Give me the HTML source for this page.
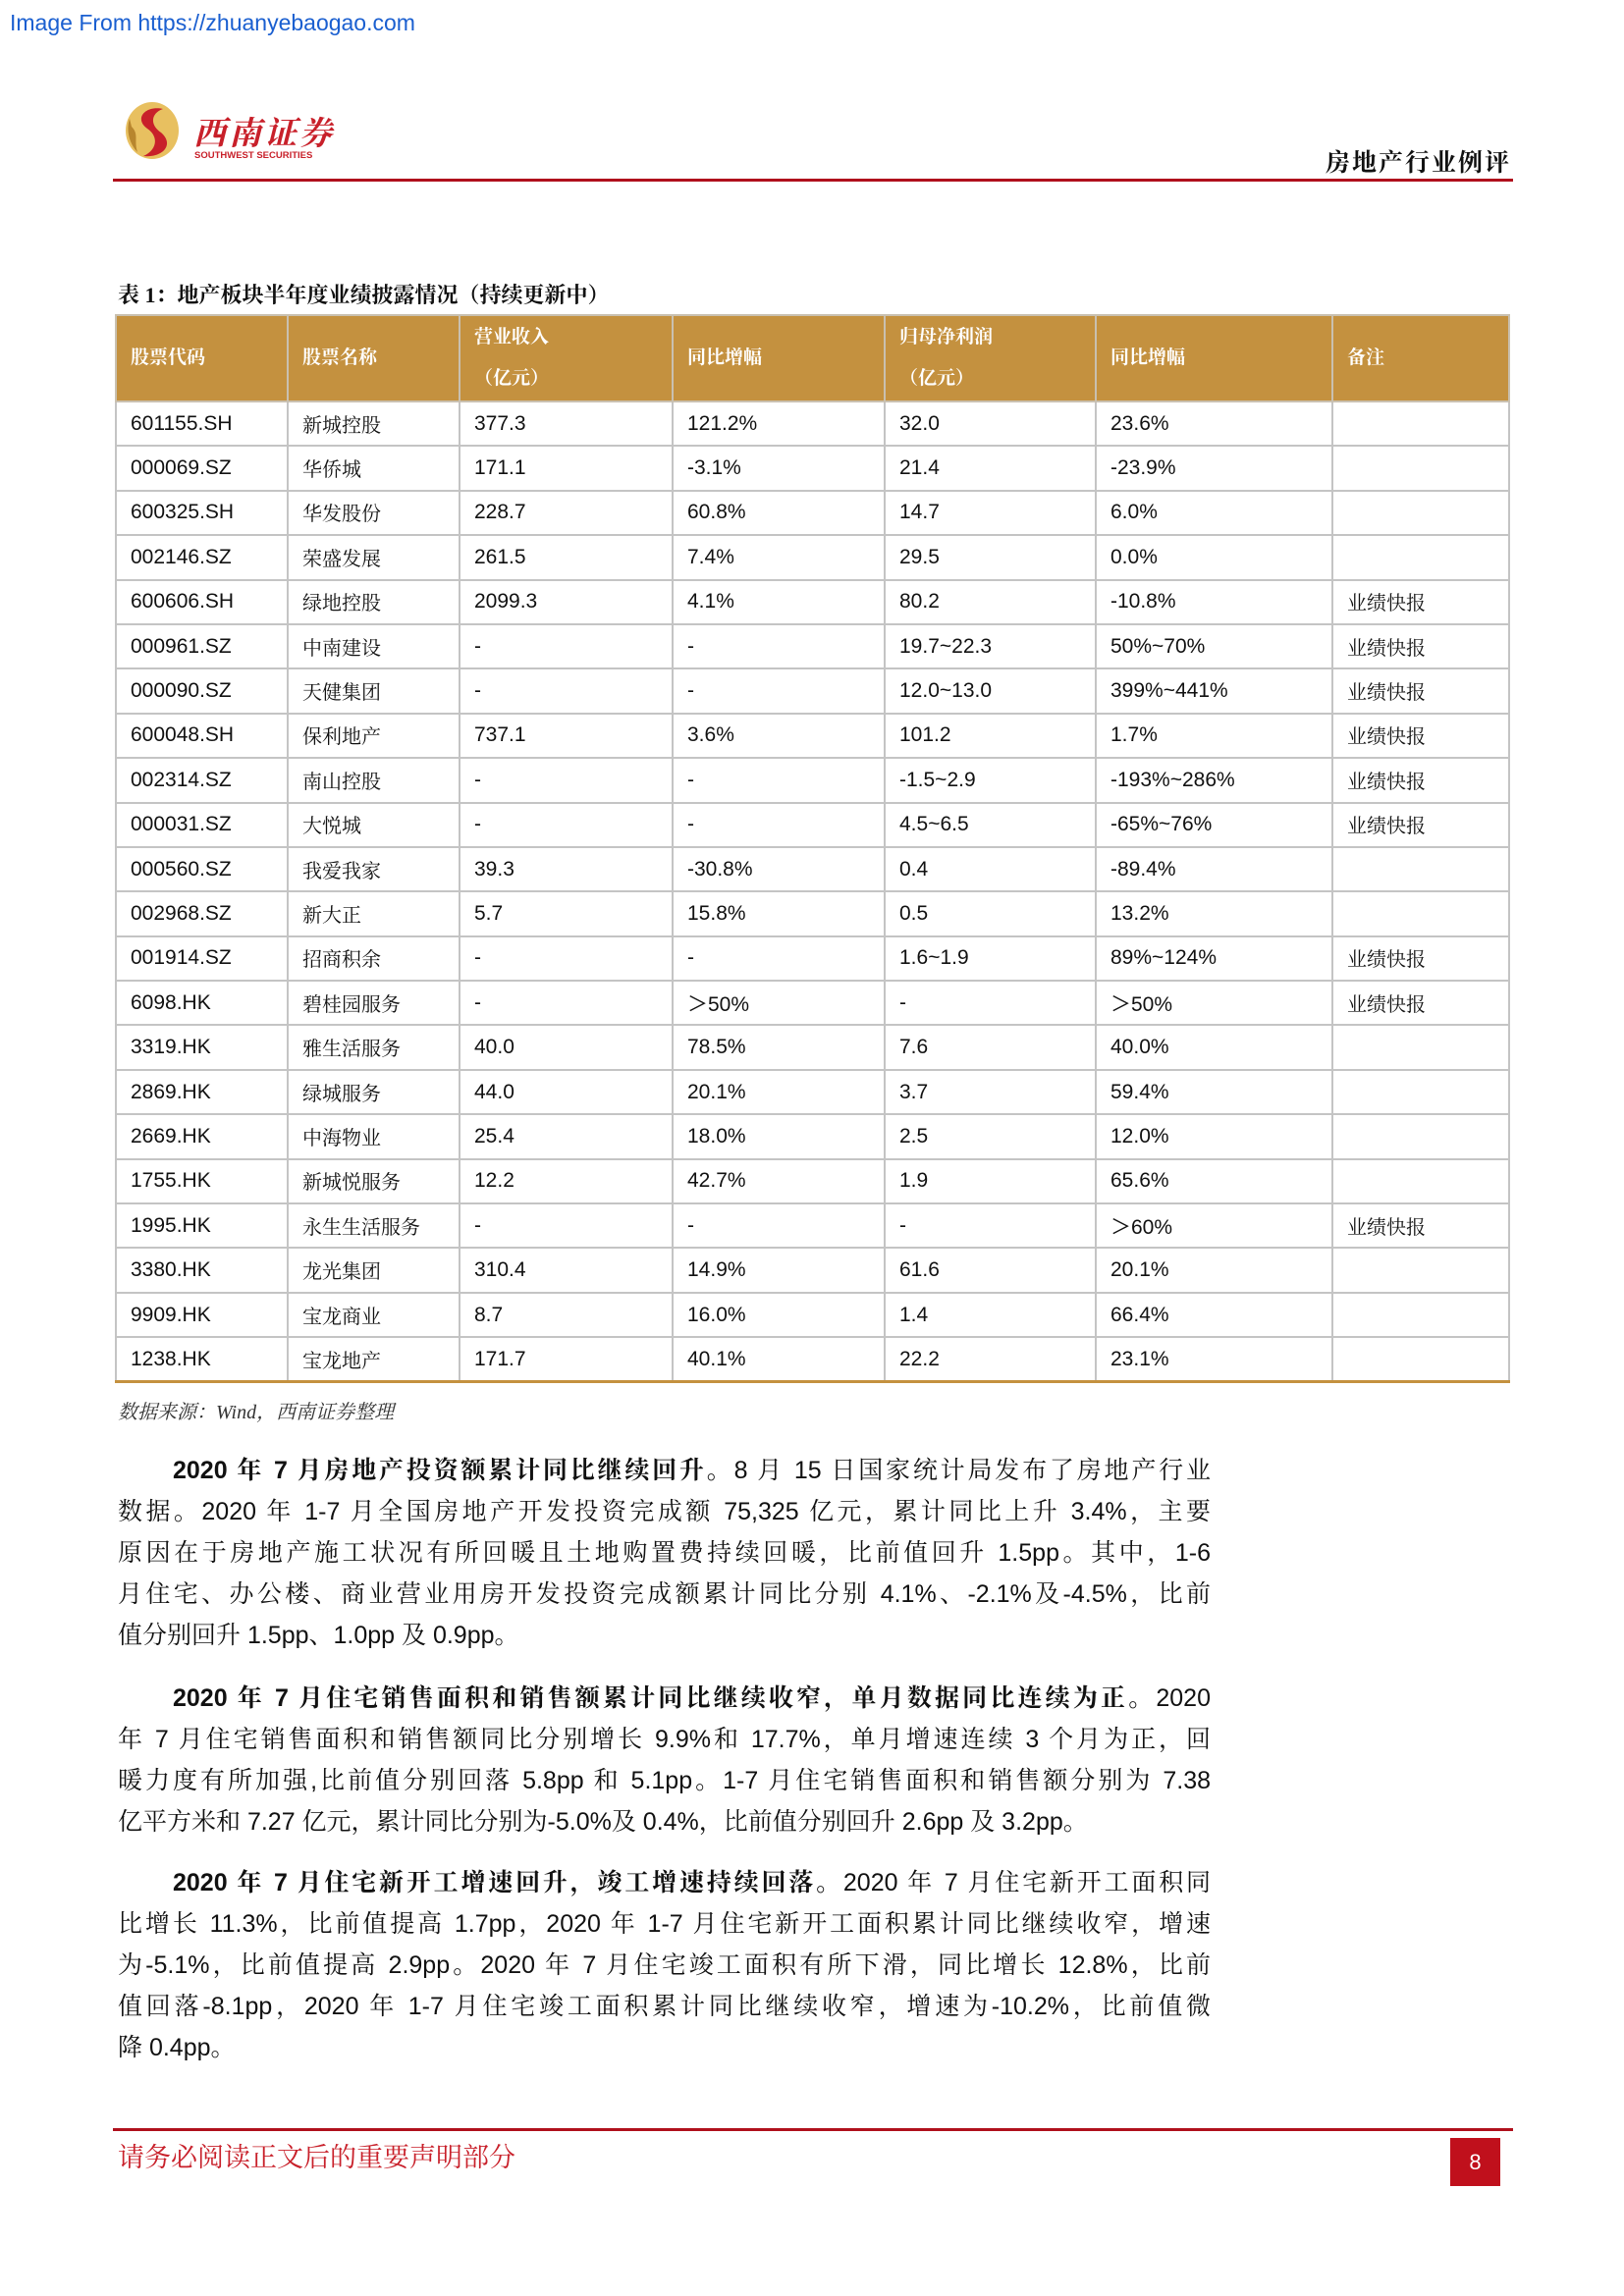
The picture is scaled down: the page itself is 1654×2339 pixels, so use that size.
<!DOCTYPE html>
<html><head><meta charset="utf-8"><style>
*{margin:0;padding:0;box-sizing:border-box}
body{width:1654px;height:2339px;background:#fff;position:relative;font-family:"Liberation Sans","Noto Sans CJK SC",sans-serif;color:#111;overflow:hidden}
.abs{position:absolute}
.serif{font-family:"Liberation Serif","Noto Serif CJK SC",serif}
table{position:absolute;left:117px;top:320px;width:1419px;border-collapse:collapse;table-layout:fixed}
td,th{border:2px solid #c4c4c4;height:45.4px;padding:0 0 0 14px;font-size:21px;text-align:left;font-weight:normal;white-space:nowrap;vertical-align:middle}
th{background:#c4913f;color:#fff;height:88px;font-family:"Liberation Serif","Noto Serif CJK SC",serif;font-weight:bold;font-size:19px;line-height:42px;border-color:#c9c0b0}
td.c{font-family:"Noto Serif CJK SC",serif;font-size:20px;line-height:20px}
tr:last-child td{border-bottom:3px solid #c4913f}
.p div{height:42px;line-height:42px;font-size:25px;text-align:justify;text-align-last:justify;white-space:nowrap}
.p div.l{text-align-last:left}
.p{position:absolute;left:120px;width:1113px;font-family:"Liberation Sans","Noto Serif CJK SC",serif}
b{font-weight:bold}
</style></head><body>
<div class="abs" style="left:10px;top:10px;font-size:23px;color:#1a5fd0">Image From https://zhuanyebaogao.com</div>
<svg class="abs" style="left:126px;top:103px" width="58" height="60" viewBox="0 0 58 60">
<ellipse cx="29" cy="30" rx="27" ry="29" fill="#e8c060"/>
<path d="M40 8 C22 4 10 18 24 28 C36 36 34 50 20 56 C40 58 52 44 38 32 C26 24 28 12 40 8Z" fill="#c8202a"/>
<path d="M6 18 C2 30 6 44 14 52 C10 40 16 34 8 26Z" fill="#b8862e"/>
</svg>
<div class="abs serif" style="left:197px;top:110px;font-size:33px;font-weight:bold;color:#c8202a;letter-spacing:3px;font-style:italic">西南证券</div>
<div class="abs" style="left:198px;top:153px;font-size:9.5px;font-weight:bold;color:#c8202a;background:#fff">SOUTHWEST SECURITIES</div>
<div class="abs serif" style="left:1350px;top:146px;font-size:25px;font-weight:bold;letter-spacing:2px">房地产行业例评</div>
<div class="abs" style="left:115px;top:182px;width:1426px;height:3px;background:#b0101c"></div>
<div class="abs serif" style="left:120px;top:284px;font-size:22px;font-weight:bold">表 1：地产板块半年度业绩披露情况（持续更新中）</div>
<table>
<colgroup><col style="width:175px"><col style="width:175px"><col style="width:217px"><col style="width:216px"><col style="width:215px"><col style="width:241px"><col style="width:180px"></colgroup>
<tr><th>股票代码</th><th>股票名称</th><th>营业收入<br>（亿元）</th><th>同比增幅</th><th>归母净利润<br>（亿元）</th><th>同比增幅</th><th>备注</th></tr>
<tr><td>601155.SH</td><td class="c">新城控股</td><td>377.3</td><td>121.2%</td><td>32.0</td><td>23.6%</td><td class="c"></td></tr>
<tr><td>000069.SZ</td><td class="c">华侨城</td><td>171.1</td><td>-3.1%</td><td>21.4</td><td>-23.9%</td><td class="c"></td></tr>
<tr><td>600325.SH</td><td class="c">华发股份</td><td>228.7</td><td>60.8%</td><td>14.7</td><td>6.0%</td><td class="c"></td></tr>
<tr><td>002146.SZ</td><td class="c">荣盛发展</td><td>261.5</td><td>7.4%</td><td>29.5</td><td>0.0%</td><td class="c"></td></tr>
<tr><td>600606.SH</td><td class="c">绿地控股</td><td>2099.3</td><td>4.1%</td><td>80.2</td><td>-10.8%</td><td class="c">业绩快报</td></tr>
<tr><td>000961.SZ</td><td class="c">中南建设</td><td>-</td><td>-</td><td>19.7~22.3</td><td>50%~70%</td><td class="c">业绩快报</td></tr>
<tr><td>000090.SZ</td><td class="c">天健集团</td><td>-</td><td>-</td><td>12.0~13.0</td><td>399%~441%</td><td class="c">业绩快报</td></tr>
<tr><td>600048.SH</td><td class="c">保利地产</td><td>737.1</td><td>3.6%</td><td>101.2</td><td>1.7%</td><td class="c">业绩快报</td></tr>
<tr><td>002314.SZ</td><td class="c">南山控股</td><td>-</td><td>-</td><td>-1.5~2.9</td><td>-193%~286%</td><td class="c">业绩快报</td></tr>
<tr><td>000031.SZ</td><td class="c">大悦城</td><td>-</td><td>-</td><td>4.5~6.5</td><td>-65%~76%</td><td class="c">业绩快报</td></tr>
<tr><td>000560.SZ</td><td class="c">我爱我家</td><td>39.3</td><td>-30.8%</td><td>0.4</td><td>-89.4%</td><td class="c"></td></tr>
<tr><td>002968.SZ</td><td class="c">新大正</td><td>5.7</td><td>15.8%</td><td>0.5</td><td>13.2%</td><td class="c"></td></tr>
<tr><td>001914.SZ</td><td class="c">招商积余</td><td>-</td><td>-</td><td>1.6~1.9</td><td>89%~124%</td><td class="c">业绩快报</td></tr>
<tr><td>6098.HK</td><td class="c">碧桂园服务</td><td>-</td><td>＞50%</td><td>-</td><td>＞50%</td><td class="c">业绩快报</td></tr>
<tr><td>3319.HK</td><td class="c">雅生活服务</td><td>40.0</td><td>78.5%</td><td>7.6</td><td>40.0%</td><td class="c"></td></tr>
<tr><td>2869.HK</td><td class="c">绿城服务</td><td>44.0</td><td>20.1%</td><td>3.7</td><td>59.4%</td><td class="c"></td></tr>
<tr><td>2669.HK</td><td class="c">中海物业</td><td>25.4</td><td>18.0%</td><td>2.5</td><td>12.0%</td><td class="c"></td></tr>
<tr><td>1755.HK</td><td class="c">新城悦服务</td><td>12.2</td><td>42.7%</td><td>1.9</td><td>65.6%</td><td class="c"></td></tr>
<tr><td>1995.HK</td><td class="c">永生生活服务</td><td>-</td><td>-</td><td>-</td><td>＞60%</td><td class="c">业绩快报</td></tr>
<tr><td>3380.HK</td><td class="c">龙光集团</td><td>310.4</td><td>14.9%</td><td>61.6</td><td>20.1%</td><td class="c"></td></tr>
<tr><td>9909.HK</td><td class="c">宝龙商业</td><td>8.7</td><td>16.0%</td><td>1.4</td><td>66.4%</td><td class="c"></td></tr>
<tr><td>1238.HK</td><td class="c">宝龙地产</td><td>171.7</td><td>40.1%</td><td>22.2</td><td>23.1%</td><td class="c"></td></tr>
</table>
<div class="abs serif" style="left:120px;top:1422px;font-size:20px;font-style:italic;color:#333">数据来源：Wind，西南证券整理</div>
<div class="p" style="top:1477px">
<div style="text-indent:56px"><b>2020 年 7 月房地产投资额累计同比继续回升。</b>8 月 15 日国家统计局发布了房地产行业</div>
<div>数据。2020 年 1-7 月全国房地产开发投资完成额 75,325 亿元，累计同比上升 3.4%，主要</div>
<div>原因在于房地产施工状况有所回暖且土地购置费持续回暖，比前值回升 1.5pp。其中，1-6</div>
<div>月住宅、办公楼、商业营业用房开发投资完成额累计同比分别 4.1%、-2.1%及-4.5%，比前</div>
<div class="l">值分别回升 1.5pp、1.0pp 及 0.9pp。</div>
</div>
<div class="p" style="top:1709px">
<div style="text-indent:56px"><b>2020 年 7 月住宅销售面积和销售额累计同比继续收窄，单月数据同比连续为正。</b>2020</div>
<div>年 7 月住宅销售面积和销售额同比分别增长 9.9%和 17.7%，单月增速连续 3 个月为正，回</div>
<div>暖力度有所加强,比前值分别回落 5.8pp 和 5.1pp。1-7 月住宅销售面积和销售额分别为 7.38</div>
<div class="l">亿平方米和 7.27 亿元，累计同比分别为-5.0%及 0.4%，比前值分别回升 2.6pp 及 3.2pp。</div>
</div>
<div class="p" style="top:1897px">
<div style="text-indent:56px"><b>2020 年 7 月住宅新开工增速回升，竣工增速持续回落。</b>2020 年 7 月住宅新开工面积同</div>
<div>比增长 11.3%，比前值提高 1.7pp，2020 年 1-7 月住宅新开工面积累计同比继续收窄，增速</div>
<div>为-5.1%，比前值提高 2.9pp。2020 年 7 月住宅竣工面积有所下滑，同比增长 12.8%，比前</div>
<div>值回落-8.1pp，2020 年 1-7 月住宅竣工面积累计同比继续收窄，增速为-10.2%，比前值微</div>
<div class="l">降 0.4pp。</div>
</div>
<div class="abs" style="left:115px;top:2168px;width:1426px;height:3px;background:#b0101c"></div>
<div class="abs serif" style="left:120px;top:2176px;font-size:27px;color:#c8202a">请务必阅读正文后的重要声明部分</div>
<div class="abs" style="left:1477px;top:2178px;width:51px;height:49px;background:#c0101c;color:#fff;font-size:22px;text-align:center;line-height:49px">8</div>
</body></html>
